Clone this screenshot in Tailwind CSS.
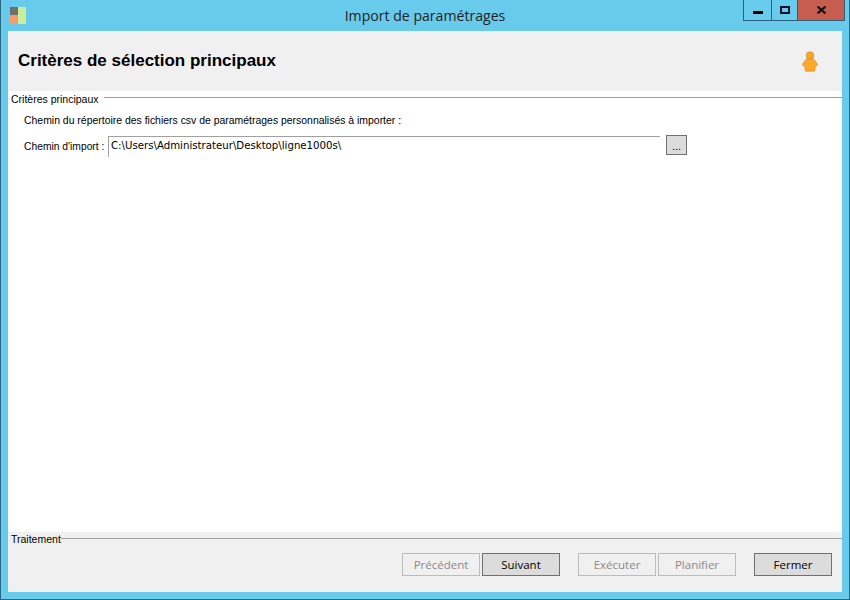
<!DOCTYPE html>
<html lang="fr">
<head>
  <meta charset="UTF-8" />
  <title>Import de paramétrages</title>
  <script src="https://cdn.jsdelivr.net/npm/@tailwindcss/browser@4"></script>
</head>
<body class="w-[850px] h-[600px] overflow-hidden bg-[#69cbec] font-['Liberation_Sans',sans-serif]">
  <div class="w-full h-full flex flex-col border border-[#2a6a85] border-t-0">
    <!-- title bar -->
    <div class="h-[31px] shrink-0 grid grid-cols-[1fr_auto_1fr] items-start">
      <div class="pl-[9px] pt-[7px]">
        <svg width="17" height="17" viewBox="0 0 17 17">
          <rect x="0" y="0" width="8" height="8" fill="#6f6f6f" />
          <rect x="0" y="8" width="8" height="9" fill="#f79a6c" />
          <rect x="8" y="0" width="8" height="17" fill="#c8f09a" />
        </svg>
      </div>
      <div class="pt-[7px] text-[14.1px] leading-[18px] text-[#222] font-['Open_Sans',sans-serif]">Import de paramétrages</div>
      <div class="flex justify-end mr-[4px]">
        <div class="flex h-[21px] border border-t-0 border-[#2f5f78]">
          <div class="w-[28px] flex items-center justify-center border-r border-[#2f5f78]">
            <div class="w-[10px] h-[3px] mt-[5px] bg-black"></div>
          </div>
          <div class="w-[26px] flex items-center justify-center border-r border-[#2f5f78]">
            <div class="w-[10px] h-[8px] -mt-[1px] border-2 border-[#08122e]"></div>
          </div>
          <div class="w-[46px] flex items-center justify-center bg-[#c75c50]">
            <svg width="9" height="8" viewBox="0 0 9 8"><path d="M0.5 0.5L8.5 7.5M8.5 0.5L0.5 7.5" stroke="#111" stroke-width="2.2" /></svg>
          </div>
        </div>
      </div>
    </div>

    <!-- client area -->
    <div class="flex-1 mx-[7px] mb-[7px] flex flex-col bg-white">
      <div class="h-[60px] shrink-0 bg-[#f0f0f0] flex items-center justify-between pl-[10px] pr-[23px]">
        <h1 class="text-[17px] font-bold text-black">Critères de sélection principaux</h1>
        <svg width="18" height="21" viewBox="0 0 18 21">
          <circle cx="9" cy="4.5" r="3.8" fill="#f7a52c" stroke="#d98a1c" stroke-width="0.6" />
          <path d="M5.5 8H12.5C13.5 8.5 14 9.5 14.2 10.5C15.5 11 16.5 12.5 16.3 14.5L14 15.5V19C14 19.8 13.5 20.3 12.7 20.3H5.3C4.5 20.3 4 19.8 4 19V15.5L1.7 14.5C1.5 12.5 2.5 11 3.8 10.5C4 9.5 4.5 8.5 5.5 8Z" fill="#fba927" stroke="#d98a1c" stroke-width="0.6" />
        </svg>
      </div>

      <div class="flex-1 flex flex-col pl-[3px]">
        <div class="flex items-start h-[14px] mt-px text-[10.5px] leading-[14px] text-black">
          <span class="pr-[5px]">Critères principaux</span>
          <div class="flex-1 h-px mt-[5px] bg-[#a0a0a0]"></div>
        </div>
        <p class="ml-[13px] mt-[8px] text-[10.45px] leading-[14px] text-black">Chemin du répertoire des fichiers csv de paramétrages personnalisés à importer :</p>
        <div class="ml-[13px] mt-[8px] flex items-start">
          <label class="w-[84px] pt-[4px] whitespace-nowrap text-[10.3px] leading-[14px] text-black">Chemin d'import :</label>
          <div class="w-[552px] h-[21px] pl-[2px] pt-px border-l border-t border-[#a0a0a0] font-['DejaVu_Sans',sans-serif] text-[10.2px] leading-[15px] text-black">C:\Users\Administrateur\Desktop\ligne1000s\</div>
          <button class="ml-[6px] -mt-px w-[21px] h-[20px] bg-[#dcdcdc] border border-[#707070] text-[11px] leading-[20px] text-black">...</button>
        </div>
      </div>

      <div class="h-[60px] shrink-0 bg-[#f0f0f0] flex flex-col pl-[3px]">
        <div class="flex items-start h-[14px] text-[10.5px] leading-[14px] text-black">
          <span>Traitement</span>
          <div class="flex-1 h-px mt-[6px] bg-[#a0a0a0]"></div>
        </div>
        <div class="mt-[7px] flex justify-end pr-[10px] font-['Open_Sans',sans-serif] text-[11.5px]">
          <button disabled class="w-[78px] h-[23px] border border-[#bcbcbc] bg-[#f0f0f0] text-[#8a8a8a]">Précédent</button>
          <button class="ml-[2px] w-[78px] h-[23px] border border-[#707070] bg-[#dcdcdc] text-black">Suivant</button>
          <button disabled class="ml-[18px] w-[78px] h-[23px] border border-[#bcbcbc] bg-[#f0f0f0] text-[#8a8a8a]">Exécuter</button>
          <button disabled class="ml-[2px] w-[78px] h-[23px] border border-[#bcbcbc] bg-[#f0f0f0] text-[#8a8a8a]">Planifier</button>
          <button class="ml-[18px] w-[78px] h-[23px] border border-[#707070] bg-[#dcdcdc] text-black">Fermer</button>
        </div>
      </div>
    </div>
  </div>
</body>
</html>
